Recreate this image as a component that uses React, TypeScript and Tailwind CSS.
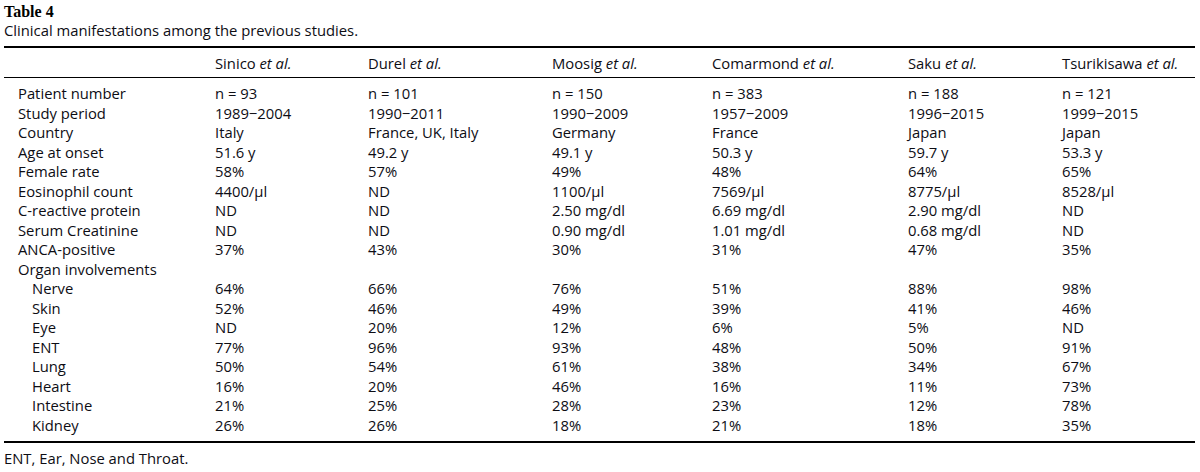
import React from "react";

const cols = ["Sinico", "Durel", "Moosig", "Comarmond", "Saku", "Tsurikisawa"];

const rows: { label: string; indent?: boolean; vals: string[] }[] = [
  { label: "Patient number", vals: ["n = 93", "n = 101", "n = 150", "n = 383", "n = 188", "n = 121"] },
  { label: "Study period", vals: ["1989\u22122004", "1990\u22122011", "1990\u22122009", "1957\u22122009", "1996\u22122015", "1999\u22122015"] },
  { label: "Country", vals: ["Italy", "France, UK, Italy", "Germany", "France", "Japan", "Japan"] },
  { label: "Age at onset", vals: ["51.6 y", "49.2 y", "49.1 y", "50.3 y", "59.7 y", "53.3 y"] },
  { label: "Female rate", vals: ["58%", "57%", "49%", "48%", "64%", "65%"] },
  { label: "Eosinophil count", vals: ["4400/\u00b5l", "ND", "1100/\u00b5l", "7569/\u00b5l", "8775/\u00b5l", "8528/\u00b5l"] },
  { label: "C-reactive protein", vals: ["ND", "ND", "2.50 mg/dl", "6.69 mg/dl", "2.90 mg/dl", "ND"] },
  { label: "Serum Creatinine", vals: ["ND", "ND", "0.90 mg/dl", "1.01 mg/dl", "0.68 mg/dl", "ND"] },
  { label: "ANCA-positive", vals: ["37%", "43%", "30%", "31%", "47%", "35%"] },
  { label: "Organ involvements", vals: ["", "", "", "", "", ""] },
  { label: "Nerve", indent: true, vals: ["64%", "66%", "76%", "51%", "88%", "98%"] },
  { label: "Skin", indent: true, vals: ["52%", "46%", "49%", "39%", "41%", "46%"] },
  { label: "Eye", indent: true, vals: ["ND", "20%", "12%", "6%", "5%", "ND"] },
  { label: "ENT", indent: true, vals: ["77%", "96%", "93%", "48%", "50%", "91%"] },
  { label: "Lung", indent: true, vals: ["50%", "54%", "61%", "38%", "34%", "67%"] },
  { label: "Heart", indent: true, vals: ["16%", "20%", "46%", "16%", "11%", "73%"] },
  { label: "Intestine", indent: true, vals: ["21%", "25%", "28%", "23%", "12%", "78%"] },
  { label: "Kidney", indent: true, vals: ["26%", "26%", "18%", "21%", "18%", "35%"] },
];

const grid =
  "grid grid-cols-[197px_153px_184px_160px_196px_154px_1fr] pl-[14px]";

export default function App() {
  return (
    <div
      className="w-[1200px] h-[472px] bg-white text-[#0d0d14] pl-[4px] pr-[5px] pt-[3px]"
      style={{ fontFamily: '"Open Sans", "Noto Sans", sans-serif' }}
    >
      <div
        className="text-[16px] font-bold leading-[17px] text-black"
        style={{ fontFamily: '"Liberation Serif", serif' }}
      >
        Table 4
      </div>
      <div className="text-[14.8px] leading-[19px] mt-[1px] whitespace-nowrap">
        Clinical manifestations among the previous studies.
      </div>
      <div className="mt-[6px] border-t-2 border-black" />
      <div className={`${grid} text-[14.8px] leading-[19px] pt-[6px] pb-[4px] whitespace-nowrap`}>
        <div />
        {cols.map((c) => (
          <div key={c}>
            {c} <span className="italic">et al.</span>
          </div>
        ))}
      </div>
      <div className="border-t-[1.5px] border-black" />
      <div className={`${grid} text-[14.8px] leading-[19.5px] pt-[6px] pb-[6px] whitespace-nowrap`}>
        {rows.map((r) => (
          <React.Fragment key={r.label}>
            <div className={r.indent ? "pl-[14px]" : ""}>{r.label}</div>
            {r.vals.map((v, i) => (
              <div key={i}>{v}</div>
            ))}
          </React.Fragment>
        ))}
      </div>
      <div className="border-t-2 border-black" />
      <div className="text-[14.8px] leading-[19px] mt-[6px] whitespace-nowrap">ENT, Ear, Nose and Throat.</div>
    </div>
  );
}
